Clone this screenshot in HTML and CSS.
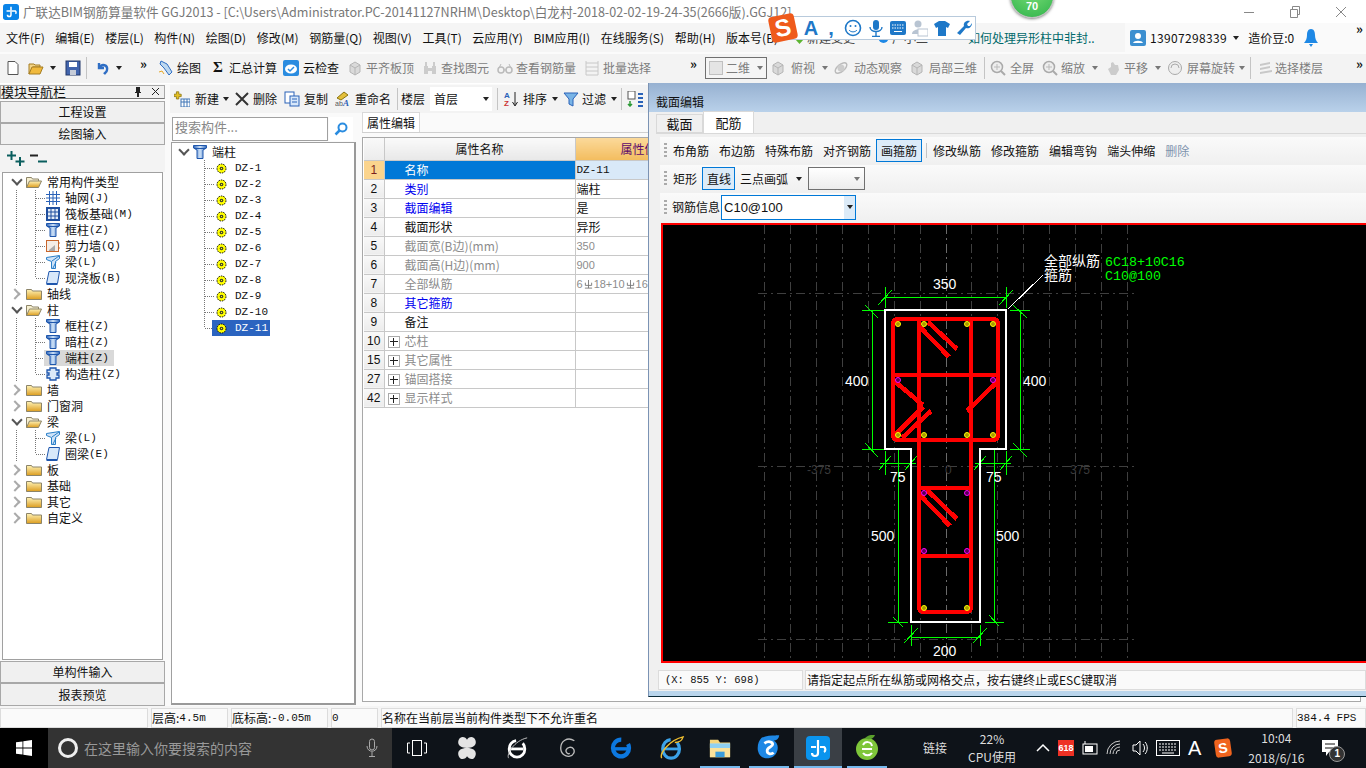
FILE: index.html
```html
<!DOCTYPE html>
<html lang="zh-CN">
<head>
<meta charset="utf-8">
<title>广联达BIM钢筋算量软件 GGJ2013</title>
<link rel="stylesheet" href="styles.css">
</head>
<body>
<svg class="defs" width="0" height="0" aria-hidden="true">
  <defs>
    <linearGradient id="gBlue" x1="0" x2="1" y1="0" y2="0"><stop offset="0" stop-color="#2a62b8"/><stop offset=".5" stop-color="#cfe3f8"/><stop offset="1" stop-color="#2a62b8"/></linearGradient>
    <linearGradient id="gFold" x1="0" x2="0" y1="0" y2="1"><stop offset="0" stop-color="#fff3b8"/><stop offset="1" stop-color="#dc9d1e"/></linearGradient>
    <symbol id="i-col" viewBox="0 0 14 14"><path d="M0.5 .5h13v2.500l-3.500 2v8.500h-6v-8.500l-3.500-2z" fill="url(#gBlue)" stroke="#1f57ad"/><path d="M1 3.500h12" stroke="#1f57ad"/></symbol>
    <symbol id="i-fold" viewBox="0 0 16 12"><path d="M.5 1.500h5l1 1.500h9v8.500h-15z" fill="url(#gFold)" stroke="#8c8468"/></symbol>
    <symbol id="i-foldo" viewBox="0 0 16 12"><path d="M.5 11.500v-10h5l1 1.500h6v2" fill="#f6efd0" stroke="#8c8468"/><path d="M.5 11.500l3-6.500h12l-3 6.500z" fill="url(#gFold)" stroke="#8c8468"/></symbol>
    <symbol id="i-gear" viewBox="0 0 11 11"><circle cx="5.500" cy="5.500" r="4.500" fill="#ff0" stroke="#000" stroke-dasharray="1.500 1"/><circle cx="5.500" cy="5.500" r="1.800" fill="#333"/><circle cx="5.500" cy="5.500" r=".7" fill="#ff0"/></symbol>
    <symbol id="i-grid" viewBox="0 0 14 14"><path d="M0 3.500h14M0 7h14M0 10.500h14M3.500 0v14M7 0v14M10.500 0v14" stroke="#2a62b8" fill="none"/></symbol>
    <symbol id="i-raft" viewBox="0 0 14 14"><rect x="1" y="1" width="12" height="12" fill="#e5eef8" stroke="#1f4f9e" stroke-width="2"/><path d="M5 1v12M9 1v12M1 5h12M1 9h12" stroke="#1f4f9e"/></symbol>
    <symbol id="i-wall" viewBox="0 0 14 14"><rect x=".5" y="1.500" width="12" height="11" fill="#f4ede6" stroke="#c8662c"/><path d="M3 11l6-5v6H3z" fill="#aaa"/><path d="M13 4h1M13 9h1" stroke="#c8662c"/></symbol>
    <symbol id="i-beam" viewBox="0 0 14 14"><path d="M.5 2.500l13-2v3l-4 3v7h-4v-7l-5-2z" fill="#cfe3f8" stroke="#2a7fc8"/><path d="M6 6l7-5M7 13l3-6" stroke="#2a7fc8"/></symbol>
    <symbol id="i-slab" viewBox="0 0 14 14"><path d="M3 .5h10.500l-2 12H.5z" fill="#d8e8fa" stroke="#1f57ad"/><path d="M.5 13.500h11" stroke="#1f57ad" stroke-width="1.500"/></symbol>
    <symbol id="i-gzz" viewBox="0 0 14 14"><path d="M4 1h6v2h3v3h-2v2h2v3h-3v2h-6v-2H1V8h2V6H1V3h3z" fill="#dce9f8" stroke="#1f57ad" stroke-width="1.300"/></symbol>
    <symbol id="i-gray" viewBox="0 0 16 16"><path d="M3 5l5-3 5 3v7l-5 3-5-3z" fill="#d9d9d9" stroke="#b5b5b5"/><path d="M3 5l5 3 5-3M8 8v7" stroke="#b5b5b5" fill="none"/></symbol>
    <symbol id="i-mag" viewBox="0 0 16 16"><circle cx="7" cy="7" r="5.500" fill="#eee" stroke="#aaa" stroke-width="1.500"/><path d="M11 11l4 4" stroke="#aaa" stroke-width="2"/><path d="M7 4v6M4 7h6" stroke="#bbb"/></symbol>
    <symbol id="i-rebar" viewBox="0 0 10 10"><path d="M1.500 3v3h7V3M5 0v9M1 9h8" fill="none" stroke="#777"/></symbol>
  </defs>
</svg>

<div class="app">
  <header class="titlebar">
    <svg class="app-ico" viewBox="0 0 18 18"><rect width="18" height="18" rx="3" fill="#0a84e8"/><path d="M9 3v9a2 2 0 0 1-4 0M4 8h4M10 8h4a2 2 0 0 1 0 3" fill="none" stroke="#fff" stroke-width="1.700"/></svg>
    <span class="title-text">广联达BIM钢筋算量软件 GGJ2013 - [C:\Users\Administrator.PC-20141127NRHM\Desktop\白龙村-2018-02-02-19-24-35(2666版).GGJ12]</span>
    <div class="winctl">
      <svg width="12" height="12" viewBox="0 0 12 12"><path d="M1 6.500h10" stroke="#888"/></svg>
      <svg width="12" height="12" viewBox="0 0 12 12"><path d="M1.500 3.500h7v8h-7zM3.500 3.500v-3h7v8h-2" fill="none" stroke="#888"/></svg>
      <svg width="12" height="12" viewBox="0 0 12 12"><path d="M1 1l10 10M11 1L1 11" stroke="#888"/></svg>
    </div>
  </header>

  <nav class="menubar">
    <div class="menus">
      <span>文件(F)</span><span>编辑(E)</span><span>楼层(L)</span><span>构件(N)</span><span>绘图(D)</span><span>修改(M)</span><span>钢筋量(Q)</span><span>视图(V)</span><span>工具(T)</span><span>云应用(Y)</span><span>BIM应用(I)</span><span>在线服务(S)</span><span>帮助(H)</span><span>版本号(B)</span>
    </div>
    <div class="news">
      <span class="news-a"><svg width="11" height="12" viewBox="0 0 11 12"><path d="M1 1h9v6l-4.500 5L1 7z" fill="#5cb531"/></svg>新建变更</span>
      <span class="news-b"><svg width="13" height="12" viewBox="0 0 13 12"><circle cx="6.500" cy="6" r="5" fill="#1e88e5"/></svg>广小二</span>
      <span class="news-c">如何处理异形柱中非封..</span>
    </div>
    <div class="account">
      <svg class="ac-ico" viewBox="0 0 16 16"><rect width="16" height="16" rx="2" fill="#3c8fd0"/><circle cx="8" cy="6" r="3" fill="#fff"/><path d="M3 13c1-3 9-3 10 0z" fill="#fff"/></svg>
      <span class="ac-num">13907298339</span><i class="caret ac-caret"></i><span class="ac-beans">造价豆:0</span>
      <svg class="ac-bell" viewBox="0 0 14 18"><path d="M7 0c3 0 4 3 4 6s1 6 3 8H0c2-2 3-5 3-8s1-6 4-6zM5 15h4l-2 3z" fill="#1e88e5"/></svg>
      <span class="chev">»</span>
    </div>
  </nav>

  <div class="toolbar">
    <svg class="ic16 t-new" viewBox="0 0 16 16"><path d="M3 1.500h7l3 3v10H3z" fill="#fff" stroke="#555"/></svg>
    <svg class="ic16 t-open" viewBox="0 0 16 16"><path d="M1 4h5l1 1h5v2H5l-4 7z" fill="#f3d487" stroke="#a57d22"/><path d="M1 14l3-7h11l-3 7z" fill="#f0b93c" stroke="#a57d22"/></svg><i class="caret t-c1"></i>
    <svg class="ic16 t-save" viewBox="0 0 16 16"><rect x="1" y="1" width="14" height="14" fill="#4265ad" stroke="#23386b"/><rect x="4" y="2" width="8" height="5" fill="#fff"/><rect x="5" y="10" width="6" height="5" fill="#c6ccd8"/></svg>
    <i class="sep t-s1"></i>
    <svg class="ic16 t-undo" viewBox="0 0 16 16"><path d="M4 3v5h5M4 8c3-5 9-3 8 2 0 2-2 3-3 4" fill="none" stroke="#2f6ec4" stroke-width="2.400"/></svg><i class="caret t-c2"></i>
    <span class="chev t-ch">»</span>
    <div class="tool t-draw"><svg class="ic16" viewBox="0 0 16 16"><path d="M3 1l6 3 5 8-3 3-5-7-4-4z" fill="#bcd7ef" stroke="#2f6ec4"/><path d="M1 12l3-1 2 3" fill="none" stroke="#e5a726"/></svg>绘图</div>
    <div class="tool t-sum"><b class="sigma">Σ</b>汇总计算</div>
    <div class="tool t-cloud"><svg class="ic16" viewBox="0 0 16 16"><rect width="16" height="16" rx="2" fill="#2a8ce0"/><ellipse cx="8" cy="9" rx="6" ry="4.500" fill="#fff"/><path d="M5 9l2 2 4-4" fill="none" stroke="#2a8ce0" stroke-width="1.500"/></svg>云检查</div>
    <div class="tool off t-a"><svg class="ic16"><use href="#i-gray"/></svg>平齐板顶</div>
    <div class="tool off t-b"><svg class="ic16" viewBox="0 0 16 16"><path d="M2 6h4v8H2zM10 6h4v8h-4zM3 2h2v4H3zM11 2h2v4h-2zM6 8h4v3H6z" fill="#ccc"/></svg>查找图元</div>
    <div class="tool off t-c"><svg class="ic16" viewBox="0 0 16 16"><circle cx="4" cy="10" r="3" fill="none" stroke="#bbb" stroke-width="1.500"/><circle cx="12" cy="10" r="3" fill="none" stroke="#bbb" stroke-width="1.500"/><path d="M7 10h2M2 8l2-4M14 8l-2-4" stroke="#bbb"/></svg>查看钢筋量</div>
    <div class="tool off t-d"><svg class="ic16" viewBox="0 0 16 16"><path d="M2 1v14M2 3h12M2 7h12M2 11h12M14 1v14M2 15h12" stroke="#c8c8c8" fill="none"/></svg>批量选择</div>
    <span class="chev t-ch2">»</span>
    <div class="combo2d"><i class="sq"></i><span>二维</span><i class="caret gray"></i></div>
    <div class="tool off t-e"><svg class="ic16"><use href="#i-gray"/></svg>俯视<i class="caret gray"></i></div>
    <div class="tool off t-f"><svg class="ic16" viewBox="0 0 16 16"><ellipse cx="8" cy="8" rx="7" ry="3.500" transform="rotate(-40 8 8)" fill="none" stroke="#bbb" stroke-width="1.500"/><circle cx="8" cy="8" r="3.500" fill="#ccc"/></svg>动态观察</div>
    <div class="tool off t-g"><svg class="ic16"><use href="#i-gray"/></svg>局部三维</div>
    <i class="sep t-s2"></i>
    <div class="tool off t-h"><svg class="ic16"><use href="#i-mag"/></svg>全屏</div>
    <div class="tool off t-i"><svg class="ic16"><use href="#i-mag"/></svg>缩放<i class="caret gray"></i></div>
    <div class="tool off t-j"><svg class="ic16" viewBox="0 0 16 16"><path d="M3 9l3-2V3l2-1 2 3h3l1 5-3 5H6z" fill="#ccc"/></svg>平移<i class="caret gray"></i></div>
    <div class="tool off t-k"><svg class="ic16" viewBox="0 0 16 16"><circle cx="8" cy="8" r="6.500" fill="#eee" stroke="#aaa"/><path d="M4 8a4 4 0 0 1 8 0" fill="none" stroke="#aaa"/></svg>屏幕旋转<i class="caret gray"></i></div>
    <i class="sep t-s3"></i>
    <div class="tool off t-l"><svg class="ic16" viewBox="0 0 16 16"><path d="M2 4l10-2v2L2 6zM2 8l10-2v2L2 10zM2 12l12-2v2L2 14z" fill="#c8c8c8"/></svg>选择楼层</div>
    <span class="chev t-ch3">»</span>
  </div>

  <main class="workspace">
    <aside class="nav">
      <div class="nav-title"><span>模块导航栏</span><span class="nav-pin"><svg width="10" height="10" viewBox="0 0 10 10"><path d="M3 0h4v5h1v1H6v4H4V6H2V5h1z" fill="#222"/></svg><svg width="9" height="9" viewBox="0 0 9 9"><path d="M1 1l7 7M8 1L1 8" stroke="#222"/></svg></span></div>
      <div class="nav-btn btn-a">工程设置</div>
      <div class="nav-btn">绘图输入</div>
      <div class="nav-tools">
        <svg width="18" height="15" viewBox="0 0 18 15"><path d="M4.500 0v9M0 4.500h9M13 6v9M8.500 10.500h9" stroke="#0a5e5e" stroke-width="2"/></svg>
        <svg width="17" height="15" viewBox="0 0 17 15"><path d="M0 4.500h8" stroke="#222" stroke-width="2"/><path d="M8 10.500h9" stroke="#0a5e5e" stroke-width="2"/></svg>
      </div>
      <div class="tree navtree">
        <div class="row root"><i class="xp o"></i><svg class="fold"><use href="#i-foldo"/></svg>常用构件类型</div>
        <div class="row child out"><svg class="ic"><use href="#i-grid"/></svg>轴网<b>(J)</b></div>
        <div class="row child out"><svg class="ic"><use href="#i-raft"/></svg>筏板基础<b>(M)</b></div>
        <div class="row child out"><svg class="ic"><use href="#i-col"/></svg>框柱<b>(Z)</b></div>
        <div class="row child out"><svg class="ic"><use href="#i-wall"/></svg>剪力墙<b>(Q)</b></div>
        <div class="row child out"><svg class="ic"><use href="#i-beam"/></svg>梁<b>(L)</b></div>
        <div class="row child out last"><svg class="ic"><use href="#i-slab"/></svg>现浇板<b>(B)</b></div>
        <div class="row root"><i class="xp"></i><svg class="fold"><use href="#i-fold"/></svg>轴线</div>
        <div class="row root"><i class="xp o"></i><svg class="fold"><use href="#i-foldo"/></svg>柱</div>
        <div class="row child out"><svg class="ic"><use href="#i-col"/></svg>框柱<b>(Z)</b></div>
        <div class="row child out"><svg class="ic"><use href="#i-col"/></svg>暗柱<b>(Z)</b></div>
        <div class="row child out"><span class="hl"><svg class="ic"><use href="#i-col"/></svg>端柱<b>(Z)</b></span></div>
        <div class="row child out last"><svg class="ic"><use href="#i-gzz"/></svg>构造柱<b>(Z)</b></div>
        <div class="row root"><i class="xp"></i><svg class="fold"><use href="#i-fold"/></svg>墙</div>
        <div class="row root"><i class="xp"></i><svg class="fold"><use href="#i-fold"/></svg>门窗洞</div>
        <div class="row root"><i class="xp o"></i><svg class="fold"><use href="#i-foldo"/></svg>梁</div>
        <div class="row child out"><svg class="ic"><use href="#i-beam"/></svg>梁<b>(L)</b></div>
        <div class="row child out last"><svg class="ic"><use href="#i-slab"/></svg>圈梁<b>(E)</b></div>
        <div class="row root"><i class="xp"></i><svg class="fold"><use href="#i-fold"/></svg>板</div>
        <div class="row root"><i class="xp"></i><svg class="fold"><use href="#i-fold"/></svg>基础</div>
        <div class="row root"><i class="xp"></i><svg class="fold"><use href="#i-fold"/></svg>其它</div>
        <div class="row root"><i class="xp"></i><svg class="fold"><use href="#i-fold"/></svg>自定义</div>
      </div>
      <div class="nav-btn btn-b">单构件输入</div>
      <div class="nav-btn btn-c">报表预览</div>
    </aside>

    <section class="center">
      <div class="ctoolbar">
        <div class="tool m-new"><svg class="ic16" viewBox="0 0 16 16"><path d="M3 1h3v3h3v3H6v3H3V7H0V4h3z" fill="#e5c020" stroke="#8a7410" transform="scale(.8)"/><rect x="7" y="8" width="9" height="8" fill="#fff" stroke="#3f74b5"/><path d="M7 11h9M10 8v8M13 8v8" stroke="#3f74b5"/></svg>新建<i class="caret"></i></div>
        <div class="tool m-del"><svg class="ic16" viewBox="0 0 16 16"><path d="M2 2l12 12M14 2L2 14" stroke="#333" stroke-width="2"/></svg>删除</div>
        <div class="tool m-copy"><svg class="ic16" viewBox="0 0 16 16"><rect x="1" y="1" width="9" height="11" fill="#fff" stroke="#2a62b8"/><rect x="6" y="5" width="9" height="10" fill="#d8e8fa" stroke="#2a62b8"/><path d="M8 8h5M8 11h5" stroke="#2a62b8"/></svg>复制</div>
        <div class="tool m-ren"><svg class="ic16" viewBox="0 0 16 16"><path d="M2 7l7-6 4 3-7 5z" fill="#e4bf3a" stroke="#8a7410"/><text class="ren-t" x="0" y="15">ab</text><text class="ren-a" x="8" y="15">A</text></svg>重命名</div>
        <i class="sep m-s1"></i>
        <span class="m-floor">楼层</span>
        <div class="floor-combo"><span>首层</span><i class="caret"></i></div>
        <i class="sep m-s2"></i>
        <div class="tool m-sort"><svg class="ic16" viewBox="0 0 16 16"><text class="sort-a" x="1" y="7">A</text><text class="sort-z" x="1" y="15">Z</text><path d="M12 1v13M9.500 11l2.500 4 2.500-4" stroke="#222" fill="none"/></svg>排序<i class="caret"></i></div>
        <div class="tool m-filter"><svg class="ic16" viewBox="0 0 16 16"><path d="M1 2h14l-5 6v7l-4-2V8z" fill="#79b4e6" stroke="#2a62b8"/></svg>过滤<i class="caret"></i></div>
        <i class="sep m-s3"></i>
        <svg class="ic16 m-last" viewBox="0 0 16 16"><rect x="1" y="0" width="7" height="8" fill="#fff" stroke="#555"/><path d="M3 10v5M1 13l2 2 2-2" stroke="#2c9a36" fill="none" stroke-width="1.500"/><path d="M11 3h5M11 7h5M11 11h5M11 15h5" stroke="#2a62b8" stroke-width="2"/></svg>
      </div>
      <div class="center-body">
        <div class="list-col">
          <div class="search"><div class="search-in">搜索构件...</div><div class="search-btn"><svg width="14" height="14" viewBox="0 0 14 14"><circle cx="8.500" cy="5.500" r="4" fill="none" stroke="#2a8ce0" stroke-width="2"/><path d="M5.500 8.500L1.500 12.500" stroke="#2a8ce0" stroke-width="2.500"/></svg></div></div>
          <div class="tree list">
            <div class="row lroot"><i class="xp o"></i><svg class="ic"><use href="#i-col"/></svg>端柱</div>
            <div class="row item"><svg class="gear"><use href="#i-gear"/></svg><b>DZ-1</b></div>
            <div class="row item"><svg class="gear"><use href="#i-gear"/></svg><b>DZ-2</b></div>
            <div class="row item"><svg class="gear"><use href="#i-gear"/></svg><b>DZ-3</b></div>
            <div class="row item"><svg class="gear"><use href="#i-gear"/></svg><b>DZ-4</b></div>
            <div class="row item"><svg class="gear"><use href="#i-gear"/></svg><b>DZ-5</b></div>
            <div class="row item"><svg class="gear"><use href="#i-gear"/></svg><b>DZ-6</b></div>
            <div class="row item"><svg class="gear"><use href="#i-gear"/></svg><b>DZ-7</b></div>
            <div class="row item"><svg class="gear"><use href="#i-gear"/></svg><b>DZ-8</b></div>
            <div class="row item"><svg class="gear"><use href="#i-gear"/></svg><b>DZ-9</b></div>
            <div class="row item"><svg class="gear"><use href="#i-gear"/></svg><b>DZ-10</b></div>
            <div class="row item last"><span class="sel"><svg class="gear"><use href="#i-gear"/></svg><b>DZ-11</b></span></div>
          </div>
        </div>
        <div class="prop-col">
          <div class="prop-tabs"><span class="prop-tab">属性编辑</span></div>
          <div class="prop-box">
            <table class="prop">
              <thead><tr><th class="n"></th><th class="k">属性名称</th><th class="v">属性值</th></tr></thead>
              <tbody>
                <tr class="cur"><td class="n">1</td><td class="k">名称</td><td class="v m">DZ-11</td></tr>
                <tr><td class="n">2</td><td class="k lnk">类别</td><td class="v">端柱</td></tr>
                <tr><td class="n">3</td><td class="k lnk">截面编辑</td><td class="v">是</td></tr>
                <tr><td class="n">4</td><td class="k">截面形状</td><td class="v">异形</td></tr>
                <tr><td class="n">5</td><td class="k dim">截面宽(B边)(mm)</td><td class="v dim s">350</td></tr>
                <tr><td class="n">6</td><td class="k dim">截面高(H边)(mm)</td><td class="v dim s">900</td></tr>
                <tr><td class="n">7</td><td class="k dim">全部纵筋</td><td class="v dim s">6<svg class="rb"><use href="#i-rebar"/></svg>18+10<svg class="rb"><use href="#i-rebar"/></svg>16</td></tr>
                <tr><td class="n">8</td><td class="k lnk">其它箍筋</td><td class="v"></td></tr>
                <tr><td class="n">9</td><td class="k">备注</td><td class="v"></td></tr>
                <tr><td class="n">10</td><td class="k dim"><i class="plus"></i>芯柱</td><td class="v"></td></tr>
                <tr><td class="n">15</td><td class="k dim"><i class="plus"></i>其它属性</td><td class="v"></td></tr>
                <tr><td class="n">27</td><td class="k dim"><i class="plus"></i>锚固搭接</td><td class="v"></td></tr>
                <tr><td class="n">42</td><td class="k dim"><i class="plus"></i>显示样式</td><td class="v"></td></tr>
              </tbody>
            </table>
          </div>
        </div>
      </div>
    </section>
  </main>

  <footer class="statusbar">
    <div class="st st1"></div>
    <div class="st st2">层高:<b>4.5m</b></div>
    <div class="st st3">底标高:<b>-0.05m</b></div>
    <div class="st st4"><b>0</b></div>
    <div class="st st5">名称在当前层当前构件类型下不允许重名</div>
    <div class="st st6"><b>384.4 FPS</b></div>
  </footer>

  <div class="taskbar">
    <div class="start"><svg width="16" height="16" viewBox="0 0 16 16"><path d="M0 2.300l6.500-.9v6.200H0zM7.300 1.300L16 0v7.600H7.300zM0 8.400h6.500v6.200L0 13.700zM7.300 8.400H16V16l-8.700-1.300z" fill="#fff"/></svg></div>
    <div class="tsearch">
      <i class="cortana"></i><span>在这里输入你要搜索的内容</span>
      <svg class="mic" width="12" height="20" viewBox="0 0 12 20"><rect x="3.500" y="1" width="5" height="11" rx="2.500" fill="none" stroke="#aaa"/><path d="M1 8c0 7 10 7 10 0M6 14v4M3 18.500h6" fill="none" stroke="#aaa"/></svg>
    </div>
    <div class="tapps">
      <div class="tapp taskview"><svg width="20" height="18" viewBox="0 0 20 18"><rect x="5.500" y="1.500" width="9" height="15" fill="none" stroke="#fff"/><path d="M3 4H.5v10H3M17 4h2.500v10H17" fill="none" stroke="#fff"/></svg></div>
      <div class="tapp a1"><svg width="22" height="24" viewBox="0 0 24 26"><path d="M12 13C4 13 1 9 3 4s8-3 9 0c1-3 7-5 9 0s-1 9-9 9c8 0 11 4 9 9s-7 3-9 0c-1 3-7 5-9 0s1-9 9-9z" fill="#e4e4e4"/></svg></div>
      <div class="tapp a2"><svg width="24" height="26" viewBox="0 0 26 26"><ellipse cx="13" cy="14" rx="8.500" ry="9" fill="none" stroke="#fff" stroke-width="3" stroke-dasharray="40 8"/><path d="M5 14h15" stroke="#fff" stroke-width="3"/><path d="M4 24C1 20 10 5 24 2" fill="none" stroke="#ccc"/></svg></div>
      <div class="tapp a3"><svg width="20" height="22" viewBox="0 0 22 24"><path d="M18 4C10-1 3 5 3 12s6 10 10 9 6-5 4-8-7-2-8 1 2 5 4 4" fill="none" stroke="#bbb" stroke-width="1.500"/></svg></div>
      <div class="tapp a4"><svg width="22" height="24" viewBox="0 0 26 26"><ellipse cx="13" cy="13" rx="9.500" ry="10" fill="none" stroke="#0c78e0" stroke-width="5" stroke-dasharray="46 10"/><path d="M5 14h16" stroke="#0c78e0" stroke-width="4"/></svg></div>
      <div class="tapp a5"><svg width="26" height="28" viewBox="0 0 28 28"><ellipse cx="13" cy="15" rx="9" ry="10" fill="none" stroke="#3ba3e8" stroke-width="3.500" stroke-dasharray="44 8"/><path d="M5 15h16" stroke="#3ba3e8" stroke-width="3"/><path d="M3 25C0 20 12 5 26 2 24 8 20 8 17 8" fill="none" stroke="#f0c030" stroke-width="1.500"/></svg></div>
      <div class="tapp a6 run"><svg width="22" height="22" viewBox="0 0 24 24"><path d="M1 3h9l2 3h11v16H1z" fill="#f5d67c"/><rect x="1" y="7" width="22" height="15" fill="#fbe39a"/><path d="M7 22v-6h10v6z" fill="#3a9ddb"/><rect x="1" y="7" width="22" height="5" fill="#8fd0f0"/></svg></div>
      <div class="tapp a7 run"><svg width="24" height="28" viewBox="0 0 26 30"><path d="M5 4C12 0 22 2 24 1c0 4-3 6-6 6 6 3 6 12 0 17-6 4-15 3-17-6C0 12 2 7 5 4z" fill="#1e88e5"/><path d="M8 10c4-3 9-2 9 1s-6 3-6 7 5 4 7 2" fill="none" stroke="#fff" stroke-width="3"/></svg></div>
      <div class="tapp a8 run active"><svg width="24" height="24" viewBox="0 0 24 24"><rect width="24" height="24" rx="4" fill="#0a94ee"/><path d="M12 4v13a3 3 0 0 1-6 0M5 11h5M14 11h4a3 3 0 0 1 0 5" fill="none" stroke="#fff" stroke-width="2.200"/></svg></div>
      <div class="tapp a9 run"><svg width="24" height="28" viewBox="0 0 24 28"><circle cx="12" cy="15" r="11" fill="#7ec63a"/><path d="M7 15h10M8 11c2-4 8-4 9 1M8 19c2 3 7 3 9 0" fill="none" stroke="#fff" stroke-width="2"/><path d="M10 4c4-4 8-3 10-3-1 3-4 5-8 4" fill="#5aa02c"/></svg></div>
    </div>
    <span class="t-link">链接</span>
    <div class="t-cpu"><span>22%</span><span>CPU使用</span></div>
    <div class="tray">
      <svg width="14" height="10" viewBox="0 0 14 10"><path d="M1 8l6-6 6 6" fill="none" stroke="#fff" stroke-width="1.500"/></svg>
      <span class="b618">618</span>
      <svg width="16" height="14" viewBox="0 0 16 14"><rect x="1" y="3" width="14" height="10" fill="none" stroke="#fff"/><rect x="3" y="5" width="8" height="6" fill="#fff"/><path d="M3 0v3" stroke="#fff"/></svg>
      <svg width="18" height="16" viewBox="0 0 18 16"><path d="M1 14a13 13 0 0 1 13-13M4 14a10 10 0 0 1 10-10M7 14a7 7 0 0 1 7-7M10 14a4 4 0 0 1 4-4" fill="none" stroke="#ccc"/></svg>
      <svg width="16" height="16" viewBox="0 0 16 16"><path d="M1 5h3l4-4v14l-4-4H1zM11 4c2 2 2 6 0 8M13 2c3 3 3 9 0 12" fill="none" stroke="#fff"/></svg>
      <svg width="24" height="16" viewBox="0 0 24 16"><rect x=".5" y=".5" width="23" height="15" fill="none" stroke="#fff"/><path d="M3 4h18M3 7h18M3 10h18" stroke="#fff" stroke-dasharray="2 1"/><path d="M6 13h12" stroke="#fff"/></svg>
      <span class="tray-a">A</span>
      <span class="tray-s">S</span>
    </div>
    <div class="clock"><span>10:04</span><span>2018/6/16</span></div>
    <div class="notif"><svg width="18" height="18" viewBox="0 0 18 18"><path d="M1 1h16v12H8l-3 4v-4H1z" fill="#fff"/><path d="M4 5h10M4 9h10" stroke="#111"/></svg><span class="notif-n">1</span></div>
  </div>
</div>

<section class="dialog">
  <div class="dlg-title">截面编辑</div>
  <div class="dlg-tabs"><span class="dtab">截面</span><span class="dtab on">配筋</span></div>
  <div class="dbar b1">
    <i class="grip"></i><span class="dt d1">布角筋</span><span class="dt">布边筋</span><span class="dt">特殊布筋</span><span class="dt">对齐钢筋</span><span class="dt act draw">画箍筋</span><i class="sep d-s"></i><span class="dt">修改纵筋</span><span class="dt">修改箍筋</span><span class="dt">编辑弯钩</span><span class="dt">端头伸缩</span><span class="dt dis">删除</span>
  </div>
  <div class="dbar b2">
    <i class="grip"></i><span class="dt d1">矩形</span><span class="dt act line">直线</span><span class="dt arc">三点画弧</span><i class="caret arc-c"></i><span class="dcombo"><i class="caret gray"></i></span>
  </div>
  <div class="dbar b3">
    <i class="grip"></i><span class="dt d3">钢筋信息</span><span class="info"><span>C10@100</span><i class="info-btn"><i class="caret"></i></i></span>
  </div>
  <div class="canvas">
    <svg class="cad" width="703" height="436" viewBox="663 225 703 436">
      <g class="grid">
        <path d="M764 225v436M790 225v436M816 225v436M842 225v436M868 225v436M894 225v436M920 225v436M971 225v436M997 225v436M1023 225v436M1049 225v436M1075 225v436M1101 225v436M1127 225v436"/>
        <path class="mid" d="M946 225v436"/>
        <path d="M758 293h376M758 466h376M758 639h376"/>
      </g>
      <text class="t-grid" x="807" y="474">-375</text><text class="t-grid" x="945" y="474">0</text><text class="t-grid" x="1070" y="474">375</text>
      <g class="dim-g">
        <path d="M885 287v21M1006 287v21M885 297h121M878 305l14-15M999 305l14-15"/>
        <path d="M872 310v139M862 310h22M862 449h22M865 305l13 13M865 443l13 14"/>
        <path d="M1020 310v139M1010 310h20M1010 449h20M1013 305l14 13M1013 443l14 14"/>
        <path d="M885 451v24M911 451v24M880 463h36M879 470l12-14M905 470l12-14"/>
        <path d="M980 451v24M1006 451v24M975 463h36M974 470l12-14M1000 470l12-14"/>
        <path d="M898 450v172M888 622h20M893 617l10 10M994 450v172M985 622h19M989 615l10 11"/>
        <path d="M911 625v21M980 625v21M911 637h69M904 643l14-15M973 643l14-15"/>
      </g>
      <path class="outline" d="M885 449V310h121v139h-26v173h-69V449z"/>
      <g class="rebar">
        <rect x="893" y="319" width="105" height="121" rx="5"/>
        <path d="M919 319V606q0 6 6 6h40q6 0 6-6V319M893 375h105M919 488h52M919 556h52"/>
        <path d="M928 322l29 27M920 327l29 30M893 380l30 25M893 437l30-30M902 438l29-27M997 382l-30 29M927 490l30 29M920 495l30 31"/>
      </g>
      <g class="dot-y"><circle cx="898" cy="324" r="2.500"/><circle cx="924" cy="324" r="2.500"/><circle cx="967" cy="324" r="2.500"/><circle cx="993" cy="324" r="2.500"/><circle cx="898" cy="435" r="2.500"/><circle cx="924" cy="435" r="2.500"/><circle cx="967" cy="435" r="2.500"/><circle cx="993" cy="435" r="2.500"/><circle cx="924" cy="608" r="2.500"/><circle cx="967" cy="608" r="2.500"/></g>
      <g class="dot-m"><circle cx="898" cy="380" r="2.500"/><circle cx="993" cy="380" r="2.500"/><circle cx="924" cy="493" r="2.500"/><circle cx="967" cy="493" r="2.500"/><circle cx="924" cy="551" r="2.500"/><circle cx="967" cy="551" r="2.500"/></g>
      <path class="leader" d="M1008 309l35-34"/>
      <g class="t-w">
        <text x="933" y="289">350</text><text x="845" y="386">400</text><text x="1023" y="386">400</text><text x="890" y="482">75</text><text x="986" y="482">75</text><text x="871" y="541">500</text><text x="996" y="541">500</text><text x="933" y="656">200</text>
      </g>
      <text class="t-cn" x="1044" y="266">全部纵筋</text><text class="t-cn" x="1044" y="280">箍筋</text>
      <text class="t-gr" x="1105" y="266">6C18+10C16</text><text class="t-gr" x="1105" y="280">C10@100</text>
    </svg>
  </div>
  <div class="dlg-status"><div class="ds ds1">(X: 855 Y: 698)</div><div class="ds ds2">请指定起点所在纵筋或网格交点，按右键终止或ESC键取消</div></div>
  <div class="dlg-foot"></div>
</section>

<div class="badge70"><span>70</span></div>
<div class="imebar">
  <span class="ime-s">S</span>
  <span class="ime-a">A</span>
  <span class="ime-c">,</span>
  <svg width="18" height="18" viewBox="0 0 18 18"><circle cx="9" cy="9" r="7.500" fill="none" stroke="#1e78c8" stroke-width="1.600"/><circle cx="6.500" cy="7" r="1" fill="#1e78c8"/><circle cx="11.500" cy="7" r="1" fill="#1e78c8"/><path d="M5 11c2 2.500 6 2.500 8 0" fill="none" stroke="#1e78c8"/></svg>
  <svg width="16" height="18" viewBox="0 0 16 18"><rect x="5" y="1" width="6" height="10" rx="3" fill="#1e78c8"/><path d="M2 8c0 6 12 6 12 0M8 13v4M4 17.500h8" fill="none" stroke="#1e78c8" stroke-width="1.400"/></svg>
  <svg width="16" height="14" viewBox="0 0 16 14"><rect width="16" height="14" rx="2" fill="#1e78c8"/><path d="M2 4h12M2 7h12" stroke="#fff" stroke-dasharray="1.500 1"/><path d="M4 10.500h8" stroke="#fff"/></svg>
  <svg width="16" height="18" viewBox="0 0 16 18"><circle cx="6" cy="5" r="3.500" fill="#b8c4d2"/><path d="M0 15c0-6 12-6 12 0z" fill="#b8c4d2"/><rect x="6" y="10" width="10" height="7" fill="#fff" stroke="#b8c4d2"/></svg>
  <svg width="16" height="16" viewBox="0 0 16 16"><path d="M5 1h6l5 3-2 4-2-1v9H4V7L2 8 0 4z" fill="#1e78c8"/></svg>
  <svg width="16" height="16" viewBox="0 0 16 16"><path d="M14 1l-3 3 1 2 2 0 2-3c0 4-3 6-6 5l-6 7-3-2 7-7C7 3 10 0 14 1z" fill="#1e78c8"/></svg>
</div>
</body>
</html>
```
FILE: styles.css
```css
* { box-sizing: border-box; }
html, body { margin: 0; padding: 0; width: 1366px; height: 768px; overflow: hidden; }
body { position: relative; font: 12px/16px "Noto Sans CJK SC", "Liberation Sans", sans-serif; color: #111; background: #f0f0f0; }
.defs { position: absolute; }
i { font-style: normal; display: block; flex: none; }
svg { display: block; flex: none; }
.app { width: 1366px; height: 768px; display: flex; flex-direction: column; }

/* title bar */
.titlebar { height: 23px; flex: none; background: #fff; display: flex; align-items: center; padding-left: 3px; }
.app-ico { width: 16px; height: 16px; }
.title-text { margin-left: 4px; font-size: 12.6px; color: #777; white-space: nowrap; }
.winctl { margin-left: auto; display: flex; gap: 34px; padding-right: 19px; }

/* menu */
.menubar { height: 31px; flex: none; background: #f5f5f5; display: flex; align-items: center; padding-left: 6px; border-bottom: 2px solid #fbfbfb; }
.menus { display: flex; gap: 10.6px; width: 788px; white-space: nowrap; }
.news { display: flex; width: 331px; white-space: nowrap; }
.news-a { width: 83px; color: #444; display: flex; align-items: center; gap: 2px; }
.news-b { width: 91px; color: #444; display: flex; align-items: center; gap: 2px; }
.news-c { color: #00696b; }
.account { flex: 1; height: 29px; display: flex; align-items: center; background: #fafafa; padding-left: 5px; }
.ac-ico { width: 16px; height: 16px; margin-right: 4px; }
.ac-num { letter-spacing: .35px; }
.ac-caret { margin-left: 6px; }
.ac-beans { margin-left: 9px; }
.ac-bell { width: 14px; height: 18px; margin-left: 10px; }
.account .chev { margin-left: auto; padding-right: 3px; }
.caret { width: 0; height: 0; border: 3px solid transparent; border-top: 4px solid #222; border-bottom: 0; }
.caret.gray { border-top-color: #777; }
.chev { font-size: 13px; font-weight: 700; line-height: 12px; align-self: flex-start; }

/* main toolbar */
.toolbar { height: 29px; flex: none; background: #f3f3f3; display: flex; align-items: center; padding: 0 0 2px 5px; white-space: nowrap; }
.ic16 { width: 16px; height: 16px; }
.tool { display: flex; align-items: center; gap: 3px; flex: none; }
.tool.off { color: #7d7d7d; }
.sep { width: 1px; height: 22px; background: #c4c4c4; }
.sigma { width: 16px; font: 700 15px "Liberation Serif", serif; text-align: center; }
.t-open { margin-left: 7px; } .t-c1 { margin-left: 6px; } .t-save { margin-left: 9px; } .t-s1 { margin-left: 5px; }
.t-undo { margin-left: 8px; } .t-c2 { margin-left: 5px; }
.t-ch { margin-left: 18px; align-self: center; margin-top: -8px; }
.t-draw { margin-left: 11px; } .t-sum { margin-left: 9px; } .t-cloud { margin-left: 6px; gap: 4px; }
.t-a { margin-left: 8px; } .t-b { margin-left: 8px; } .t-c { margin-left: 8px; } .t-d { margin-left: 8px; }
.t-ch2 { margin-left: 39px; align-self: center; margin-top: -8px; }
.combo2d { margin-left: 8px; width: 62px; height: 22px; border: 1px solid #707070; display: flex; align-items: center; color: #7d7d7d; padding-left: 3px; gap: 3px; background: #f5f5f5; }
.combo2d .sq { width: 14px; height: 14px; background: #e4e4e4; border: 1px solid #c0c0c0; }
.combo2d .caret { margin-left: 4px; }
.t-e { margin-left: 3px; gap: 5px; } .t-e .caret { margin-left: 2px; }
.t-f { margin-left: 5px; gap: 5px; } .t-g { margin-left: 7px; gap: 4px; } .t-s2 { margin-left: 7px; }
.t-h { margin-left: 5px; gap: 4px; } .t-i { margin-left: 8px; } .t-i .caret { margin-left: 4px; }
.t-j { margin-left: 7px; } .t-j .caret { margin-left: 4px; }
.t-k { margin-left: 6px; gap: 4px; } .t-k .caret { margin-left: 0; }
.t-s3 { margin-left: 5px; } .t-l { margin-left: 7px; gap: 1px; }
.t-ch3 { margin-left: auto; padding-right: 3px; align-self: center; margin-top: -8px; }

/* workspace */
.workspace { flex: 1; min-height: 0; display: flex; background: #fafafa; border-top: 1px solid #fff; }
.nav { width: 165px; flex: none; display: flex; flex-direction: column; padding-top: 1px; }
.nav-title { height: 14px; flex: none; border: 1px solid #a8a8a8; border-bottom-color: #777; display: flex; justify-content: space-between; align-items: center; line-height: 12px; font-size: 13px; background: #f0f0f0; }
.nav-pin { display: flex; gap: 8px; padding-right: 4px; }
.nav-btn { height: 22px; flex: none; background: #f0f0f0; border: 1px solid #a8a8a8; display: flex; align-items: center; justify-content: center; }
.btn-a { margin-top: 2px; }
.nav-tools { height: 27px; flex: none; background: #f3f3f3; display: flex; align-items: center; gap: 5px; padding-left: 7px; }
.tree { background: #fff; border: 1px solid #a0a0a0; overflow: hidden; }
.navtree { margin: 0 2px; flex: 1; min-height: 0; padding-top: 1px; }
.btn-b { margin-top: 1px; }
.btn-c { height: 23px; }
.row { height: 16px; display: flex; align-items: center; white-space: nowrap; }
.row b { font: 400 11px "Liberation Mono", monospace; }
.root { padding-left: 9px; }
.xp { width: 8px; height: 8px; margin-right: 6px; }
.xp::before { content: ""; display: block; width: 6px; height: 6px; border-right: 2px solid #aaa; border-bottom: 2px solid #aaa; transform: rotate(-45deg); margin-left: -1px; }
.xp.o::before { border-color: #555; transform: rotate(45deg); margin: -2px 0 0 1px; }
.fold { width: 16px; height: 12px; margin-right: 5px; }
.ic { width: 14px; height: 14px; margin-right: 5px; }
.child { padding-left: 43px; background-repeat: no-repeat; }
.out { background-image: repeating-linear-gradient(to bottom, #777 0 1px, transparent 1px 2px), repeating-linear-gradient(to bottom, #777 0 1px, transparent 1px 2px), repeating-linear-gradient(to right, #777 0 1px, transparent 1px 2px); background-size: 1px 100%, 1px 100%, 10px 1px; background-position: 13px 0, 32px 0, 33px 50%; }
.out.last { background-size: 1px 100%, 1px 50%, 10px 1px; }
.hl { display: flex; align-items: center; background: #d9d9d9; height: 16px; padding-right: 5px; margin-left: -2px; padding-left: 2px; }

/* center */
.center { flex: 1; min-width: 0; display: flex; flex-direction: column; padding-left: 5px; }
.ctoolbar { height: 28px; flex: none; margin-top: 1px; display: flex; align-items: center; background: #f3f3f3; padding-left: 4px; white-space: nowrap; }
.m-new { gap: 5px; } .m-new .caret { margin-left: -1px; }
.m-del { margin-left: 5px; } .m-copy { margin-left: 7px; gap: 4px; } .m-ren { margin-left: 7px; gap: 4px; }
.m-s1 { margin-left: 6px; } .m-floor { margin-left: 3px; }
.floor-combo { margin-left: 5px; width: 62px; height: 24px; background: #fff; display: flex; align-items: center; justify-content: space-between; padding: 0 3px 0 4px; }
.m-s2 { margin-left: 5px; }
.m-sort { margin-left: 5px; gap: 4px; } .m-sort .caret { margin-left: 1px; }
.m-filter { margin-left: 5px; } .m-filter .caret { margin-left: 2px; }
.m-s3 { margin-left: 4px; } .m-last { margin-left: 5px; }
.ren-t { font: 7px "Liberation Sans", sans-serif; fill: #555; } .ren-a { font: 700 italic 9px "Liberation Serif", serif; fill: #2a62b8; }
.sort-a { font: 700 8px "Liberation Sans", sans-serif; fill: #2a62b8; } .sort-z { font: 700 8px "Liberation Sans", sans-serif; fill: #c33; }
.center-body { flex: 1; min-height: 0; display: flex; padding-bottom: 1px; }
.list-col { width: 185px; flex: none; display: flex; flex-direction: column; margin-left: 1px; }
.search { height: 29px; flex: none; display: flex; padding: 4px 0 0 1px; gap: 1px; }
.search-in { width: 156px; height: 24px; background: #fff; border: 1px solid #a0a0a0; color: #888; padding: 1px 1px 0 2px; font-size: 13px; }
.search-btn { width: 24px; height: 24px; background: #fff; display: flex; align-items: center; justify-content: center; }
.list { flex: 1; min-height: 0; border-width: 1px 2px 2px 1px; border-color: #a0a0a0 #999 #999 #a0a0a0; padding-top: 1px; }
.lroot { padding-left: 7px; height: 16px; }
.item { padding-left: 44px; background: repeating-linear-gradient(to bottom, #777 0 1px, transparent 1px 2px) 32px 0/1px 100% no-repeat, repeating-linear-gradient(to right, #777 0 1px, transparent 1px 2px) 33px 50%/10px 1px no-repeat; }
.item.last { background-size: 1px 50%, 10px 1px; }
.gear { width: 11px; height: 11px; margin-right: 8px; }
.item > .sel { display: flex; align-items: center; background: #2b64c0; color: #fff; height: 16px; margin-left: -4px; padding: 0 2px 0 4px; }
.prop-col { flex: 1; min-width: 0; margin: 0 5px 3px 6px; display: flex; flex-direction: column; }
.prop-tabs { height: 20px; flex: none; display: flex; align-items: flex-end; border-bottom: 1px solid #d0d0d0; }
.prop-tab { width: 58px; height: 20px; background: #fff; border: 1px solid #d9d9d9; border-bottom: 0; display: flex; align-items: center; justify-content: center; }
.prop-box { flex: 1; min-height: 0; background: #fff; border: 1px solid #a8a8a8; margin-top: 4px; overflow: hidden; padding-left: 1px; }
.prop { border-collapse: collapse; table-layout: fixed; width: 310px; }
.prop th, .prop td { height: 19px; padding: 0; border-right: 1px solid #c8c8c8; border-bottom: 1px solid #c8c8c8; white-space: nowrap; overflow: hidden; font-weight: 400; }
.prop th { height: 22px; background: linear-gradient(#fafafa, #e8e8e8); text-align: center; }
.prop .n { width: 20px; text-align: center; background: linear-gradient(#f9f9f9, #ececec); font: 12px "Liberation Sans", sans-serif; }
.prop .k { width: 191px; padding-left: 20px; }
.prop th.k { padding-left: 0; }
.prop .v { width: 99px; padding-left: 1px; }
.prop th.v { background: linear-gradient(#fbd99a, #f3bd5f); color: #5e0b6b; text-align: left; padding-left: 45px; }
.prop td.k:has(.plus) { padding-left: 3px; }
.lnk { color: #0000f0; }
.dim { color: #8c8c8c; }
.s { font: 11px "Liberation Sans", sans-serif; }
.m { font: 11px "Liberation Mono", monospace; }
.cur .n { background: #fbd48d; color: #7a1e1e; }
.cur .k { background: #0078d7; color: #fff; }
.cur .v { background: #d9e9f8; }
.rb { display: inline-block; width: 9px; height: 9px; margin: 0 1px; vertical-align: -1px; }
.plus { display: inline-block; width: 12px; height: 12px; border: 1px solid #aaa; margin-right: 5px; vertical-align: -2px; background: linear-gradient(#222, #222) center/8px 1px no-repeat, linear-gradient(#222, #222) center/1px 8px no-repeat; }

/* status */
.statusbar { height: 22px; flex: none; background: #f5f5f5; display: flex; gap: 3px; }
.st { height: 20px; margin-top: 2px; border: 1px solid #dcdcdc; display: flex; align-items: center; white-space: nowrap; background: #fafafa; }
.st b { font: 400 11px "Liberation Mono", monospace; }
.st1 { width: 148px; } .st2 { width: 77px; } .st3 { width: 97px; } .st4 { width: 47px; } .st5 { width: 912px; } .st6 { flex: 1; }

/* taskbar */
.taskbar { height: 40px; flex: none; background: #0e1319; display: flex; align-items: center; color: #ddd; }
.taskbar > * { flex: none; }
.start { width: 48px; height: 40px; background: #000; display: flex; align-items: center; justify-content: center; }
.tsearch { width: 344px; height: 40px; background: #333; display: flex; align-items: center; padding-left: 10px; color: #999; font-size: 14px; }
.cortana { width: 20px; height: 20px; border: 3px solid #eee; border-radius: 50%; margin-right: 6px; }
.mic { margin-left: auto; margin-right: 14px; }
.tapps { display: flex; height: 40px; }
.tapp { height: 40px; display: flex; align-items: center; justify-content: center; flex: none; }
.taskview { width: 50px; } .a1 { width: 50px; } .a2 { width: 50px; } .a3 { width: 51px; } .a4 { width: 56px; } .a5 { width: 45px; }
.a6 { width: 40px; margin-left: 6px; } .a7 { width: 40px; margin-left: 9px; } .a8 { width: 48px; margin-left: 5px; } .a9 { width: 40px; margin-left: 5px; }
.run { box-shadow: inset 0 -2px 0 #76b9ed; }
.active { background: #3a3f45; }
.t-link { margin-left: 36px; white-space: nowrap; }
.t-cpu { margin-left: 19px; width: 52px; display: flex; flex-direction: column; align-items: center; line-height: 18px; white-space: nowrap; }
.tray { display: flex; align-items: center; gap: 8px; margin-left: 18px; }
.b618 { width: 16px; height: 16px; background: #ee3124; color: #fff; font: 700 9px/16px "Liberation Sans", sans-serif; text-align: center; }
.tray-a { font: 20px "Liberation Sans", sans-serif; color: #fff; }
.tray-s { width: 16px; height: 18px; margin-left: 6px; background: #f0641e; border-radius: 3px; color: #fff; font: 700 14px/18px "Liberation Sans", sans-serif; text-align: center; transform: rotate(-8deg); }
.clock { margin-left: 12px; width: 66px; display: flex; flex-direction: column; align-items: center; line-height: 20px; white-space: nowrap; }
.notif { margin-left: 12px; position: relative; }
.notif-n { position: absolute; left: 8px; top: 7px; width: 16px; height: 16px; border-radius: 50%; background: #333; border: 1px solid #999; color: #fff; font: 700 10px/14px "Liberation Sans", sans-serif; text-align: center; }

/* dialog */
.dialog { position: absolute; left: 648px; top: 83px; width: 718px; height: 614px; background: #f0f0f0; border-left: 1px solid #7b93b4; border-bottom: 1px solid #0a2a38; display: flex; flex-direction: column; }
.dlg-title { height: 29px; flex: none; background: linear-gradient(#97b1d1, #b9d1ea); padding: 11px 0 0 7px; line-height: 16px; }
.dlg-tabs { height: 22px; flex: none; margin-left: 7px; display: flex; align-items: flex-end; border-bottom: 1px solid #d9d9d9; }
.dtab { width: 47px; height: 19px; background: #f0f0f0; border: 1px solid #d9d9d9; display: flex; align-items: center; justify-content: center; font-size: 13px; }
.dtab.on { height: 22px; width: 51px; background: #fff; border-bottom: 0; }
.dbar { height: 27px; flex: none; margin: 1px 0 0 11px; display: flex; align-items: center; background: linear-gradient(#fafafa, #f0f0f0); white-space: nowrap; }
.b1 { margin-top: 3px; }
.grip { width: 3px; height: 15px; margin-left: 4px; background: repeating-linear-gradient(to bottom, #aaa 0 2px, transparent 2px 4px); }
.dt { height: 23px; display: flex; align-items: center; }
.dt + .dt { margin-left: 10px; }
.d1 { margin-left: 6px; }
.act { background: #dcebf8; border: 1px solid #0078d7; padding: 0 4px; }
.dt.draw { margin-left: 5px; }
.d-s { margin-left: 4px; margin-right: 6px; height: 15px; }
.d-s + .dt { margin-left: 0; }
.dis { color: #7f93ad; }
.dt.line { margin-left: 5px; padding: 0 3px 0 4px; }
.dt.arc { margin-left: 5px; }
.arc-c { margin-left: 8px; }
.dcombo { margin-left: 6px; width: 57px; height: 23px; border: 1px solid #707070; display: flex; align-items: center; justify-content: flex-end; padding-right: 4px; background: linear-gradient(#fff, #ececec); }
.b3 { height: 28px; }
.d3 { margin-left: 5px; }
.info { margin-left: 1px; width: 135px; height: 25px; background: #fff; border: 1px solid #0078d7; display: flex; align-items: center; justify-content: space-between; padding-left: 2px; font: 13px "Liberation Sans", sans-serif; }
.info-btn { width: 11px; height: 23px; background: #dcebf8; display: flex; align-items: center; justify-content: center; }
.canvas { height: 440px; flex: none; margin: 2px 0 0 12px; background: #000; border: 2px solid #f00; border-right: 0; }
.dlg-status { height: 20px; flex: none; margin: 7px 0 0 9px; display: flex; gap: 2px; }
.ds { height: 20px; border: 1px solid #dcdcdc; background: #fafafa; display: flex; align-items: center; padding-left: 1px; white-space: nowrap; }
.ds1 { width: 145px; font: 10.500px "Liberation Mono", monospace; padding-left: 6px; }
.ds2 { flex: 1; }
.dlg-foot { flex: 1; background: #b9d5ec; margin-top: 1px; }

/* cad */
.cad path, .cad rect { shape-rendering: crispEdges; }
.grid path { fill: none; stroke: #3f3f3f; stroke-width: 1; stroke-dasharray: 9 4 2 4; }
.grid .mid { stroke: #6a6a6a; }
.t-grid { font: 12px "Liberation Sans", sans-serif; fill: #3a3a3a; }
.dim-g path { fill: none; stroke: #0f0; stroke-width: 1; }
.outline { fill: none; stroke: #fff; stroke-width: 2; }
.rebar rect, .rebar path { fill: none; stroke: #f00; stroke-width: 4.500; }
.dot-y circle { fill: #aa9900; stroke: #ff0; stroke-width: 1; }
.dot-m circle { fill: #550055; stroke: #f0f; stroke-width: 1; }
.leader { fill: none; stroke: #fff; stroke-width: 1; }
.t-w text { font: 14px "Liberation Sans", sans-serif; fill: #fff; }
.t-cn { font: 14px "Noto Sans CJK SC", sans-serif; fill: #fff; }
.t-gr { font: 13.300px "Liberation Mono", monospace; fill: #0f0; }

/* floating */
.badge70 { position: absolute; left: 1010px; top: -26px; width: 44px; height: 44px; border-radius: 50%; background: radial-gradient(circle at 50% 30%, #7ee07a, #2fb34a); box-shadow: 0 1px 3px rgba(0,0,0,.5); border: 1px solid #bbb; color: #fff; font: 700 11px "Liberation Sans", sans-serif; display: flex; align-items: flex-end; justify-content: center; padding-bottom: 5px; }
.imebar { position: absolute; left: 771px; top: 16px; width: 205px; height: 24px; display: flex; align-items: center; gap: 6px; background: #fff; border: 1px solid #b8cadc; padding-right: 3px; }
.imebar svg { flex: none; }
.ime-s { width: 26px; height: 26px; margin: 0 0 0 -2px; background: #ef5a1b; color: #fff; border-radius: 4px; transform: rotate(-12deg); font: 700 24px/26px "Liberation Sans", sans-serif; text-align: center; }
.ime-a { margin-left: 2px; color: #1e78c8; font: 700 20px "Liberation Sans", sans-serif; }
.ime-c { width: 14px; color: #1e78c8; font: 700 20px/14px "Liberation Sans", sans-serif; text-align: center; }
```
